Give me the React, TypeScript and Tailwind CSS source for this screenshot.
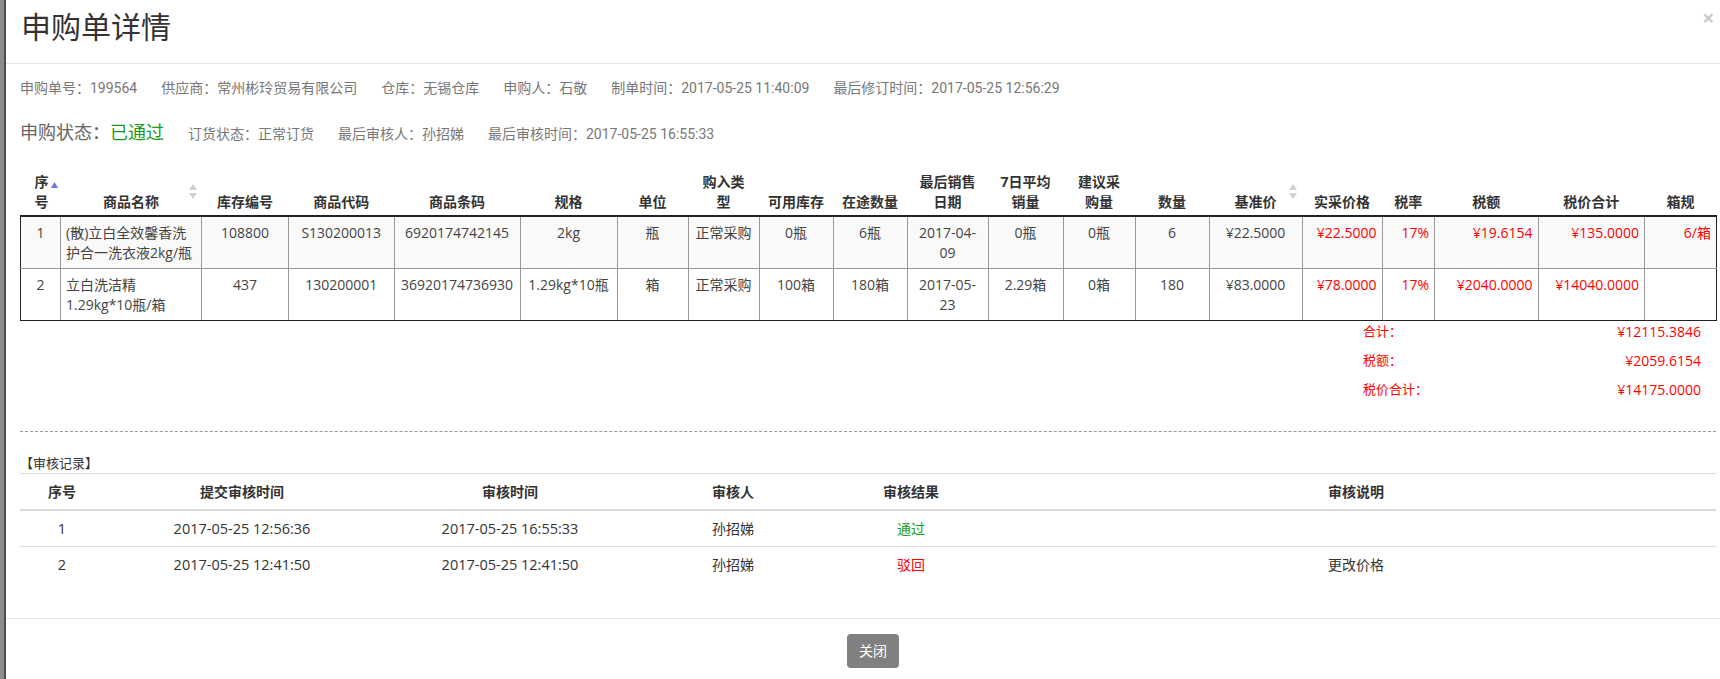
import React from 'react';

const OPEN = "font-[family-name:'Open_Sans','Noto_Sans_CJK_SC',sans-serif]";

const colW = [
  'w-[40px]', 'w-[141px]', 'w-[87px]', 'w-[105.5px]', 'w-[126px]', 'w-[97px]', 'w-[71px]', 'w-[71px]',
  'w-[74px]', 'w-[74px]', 'w-[81px]', 'w-[75px]', 'w-[72px]', 'w-[74px]', 'w-[93px]', 'w-[80px]',
  'w-[52.5px]', 'w-[103.5px]', 'w-[106.5px]', 'w-[72px]',
];

// c = center, l = left, r = right (red money columns)
const align = ['c', 'l', 'c', 'c', 'c', 'c', 'c', 'c', 'c', 'c', 'c', 'c', 'c', 'c', 'c', 'r', 'r', 'r', 'r', 'r'];

const heads: React.ReactNode[] = [
  null,
  '商品名称', '库存编号', '商品代码', '商品条码', '规格', '单位',
  <>购入类<br />型</>, '可用库存', '在途数量', <>最后销售<br />日期</>, <>7日平均<br />销量</>,
  <>建议采<br />购量</>, '数量', '基准价', '实采价格', '税率', '税额', '税价合计', '箱规',
];

const rows: React.ReactNode[][] = [
  [
    '1', <>(散)立白全效馨香洗<br />护合一洗衣液2kg/瓶</>, '108800', 'S130200013', '6920174742145', '2kg', '瓶',
    '正常采购', '0瓶', '6瓶', <>2017-04-<br />09</>, '0瓶', '0瓶', '6', '¥22.5000', '¥22.5000', '17%',
    '¥19.6154', '¥135.0000', '6/箱',
  ],
  [
    '2', <>立白洗洁精<br />1.29kg*10瓶/箱</>, '437', '130200001', '36920174736930', '1.29kg*10瓶', '箱',
    '正常采购', '100箱', '180箱', <>2017-05-<br />23</>, '2.29箱', '0箱', '180', '¥83.0000', '¥78.0000', '17%',
    '¥2040.0000', '¥14040.0000', '',
  ],
];

const audits = [
  { no: '1', submit: '2017-05-25 12:56:36', at: '2017-05-25 16:55:33', who: '孙招娣', ok: true, note: '' },
  { no: '2', submit: '2017-05-25 12:41:50', at: '2017-05-25 12:41:50', who: '孙招娣', ok: false, note: '更改价格' },
];

function SortBoth() {
  return (
    <svg width="8" height="15" viewBox="0 0 8 15" className="absolute right-[5px] top-[17px]">
      <path d="M4 0 L8 6 L0 6 Z" fill="#d0d0d0" />
      <path d="M4 15 L8 9 L0 9 Z" fill="#d0d0d0" />
    </svg>
  );
}

function SortAsc() {
  return (
    <svg width="7" height="6" viewBox="0 0 7 6" className="inline-block ml-[2px] align-[-1px]">
      <path d="M3.5 0 L7 6 L0 6 Z" fill="#7275e3" />
    </svg>
  );
}

export default function App() {
  return (
    <div className="flex w-[1720px] h-[679px] overflow-hidden bg-white font-[family-name:Roboto,'Noto_Sans_CJK_SC',sans-serif]">
      <div className="w-[4px] shrink-0 bg-[#8c8c8c]" />
      <div className="w-[2px] shrink-0 bg-[#4d4d4d]" />

      <div className="flex-1 flex flex-col bg-white min-w-0">
        {/* modal header */}
        <div className="flex items-start justify-between h-[64px] shrink-0 border-b border-[#e5e5e5]">
          <h4 className="pl-[15px] pt-[10px] text-[30px] leading-[36px] text-[#333]">申购单详情</h4>
          <button className="mt-[8px] mr-[6px] text-[21px] leading-[21px] font-bold text-black opacity-20">×</button>
        </div>

        {/* modal body */}
        <div className="pl-[14px] pr-[4px] pt-[14px] pb-[36px]">
          <div className="flex gap-[24px] text-[14px] leading-[20px] text-[#777] whitespace-nowrap">
            <span>申购单号：199564</span>
            <span>供应商：常州彬玲贸易有限公司</span>
            <span>仓库：无锡仓库</span>
            <span>申购人：石敬</span>
            <span>制单时间：2017-05-25 11:40:09</span>
            <span>最后修订时间：2017-05-25 12:56:29</span>
          </div>

          <div className="mt-[23px] flex items-baseline gap-[24px] leading-[24px] text-[14px] text-[#777] whitespace-nowrap">
            <span className="text-[18px] text-[#666]">
              申购状态：<span className="text-[#1a9c1a]">已通过</span>
            </span>
            <span>订货状态：正常订货</span>
            <span>最后审核人：孙招娣</span>
            <span>最后审核时间：2017-05-25 16:55:33</span>
          </div>

          {/* goods table */}
          <table className={`mt-[21px] w-[1696px] table-fixed border-collapse text-[14px] leading-[20px] ${OPEN}`}>
            <colgroup>
              {colW.map((w, i) => (
                <col key={i} className={w} />
              ))}
            </colgroup>
            <thead>
              <tr>
                {heads.map((h, i) => (
                  <th
                    key={i}
                    className={`relative align-bottom pt-[5px] pb-[3px] text-center font-bold text-[#333] border-b-2 border-[#222] ${
                      i === 0 ? 'px-0' : 'px-[5px]'
                    }`}
                  >
                    {i === 0 ? (
                      <div className="text-left pl-[14px] whitespace-nowrap">
                        序<SortAsc />
                        <br />号
                      </div>
                    ) : (
                      h
                    )}
                    {(i === 1 || i === 14) && <SortBoth />}
                  </th>
                ))}
              </tr>
            </thead>
            <tbody>
              {rows.map((r, ri) => (
                <tr key={ri} className={ri === 0 ? 'bg-[#f9f9f9]' : 'bg-white'}>
                  {r.map((c, ci) => (
                    <td
                      key={ci}
                      className={`align-top pt-[6px] pb-[5px] px-[5px] border border-[#999] whitespace-nowrap ${
                        align[ci] === 'l' ? 'text-left text-[#444]' : align[ci] === 'r' ? 'text-right text-[#f00]' : 'text-center text-[#444]'
                      } ${ci === 0 ? 'border-l-[#222]' : ''} ${ci === r.length - 1 ? 'border-r-[#222]' : ''} ${
                        ri === rows.length - 1 ? 'border-b-[#222]' : ''
                      }`}
                    >
                      {c}
                    </td>
                  ))}
                </tr>
              ))}
            </tbody>
          </table>

          {/* totals */}
          <div className="ml-auto mr-[15px] w-[338px] pt-[1px] text-[#f00]">
            {[
              ['合计：', '¥12115.3846'],
              ['税额：', '¥2059.6154'],
              ['税价合计：', '¥14175.0000'],
            ].map(([k, v]) => (
              <div key={k} className="flex justify-between h-[29px] leading-[20px]">
                <span className="text-[13px]">{k}</span>
                <span className={`text-[14px] ${OPEN}`}>{v}</span>
              </div>
            ))}
          </div>

          <div className="mt-[22px] border-t border-dashed border-[#999]" />

          <div className="pt-[23px] text-[13px] leading-[18px] text-[#333]">【审核记录】</div>

          {/* audit table */}
          <table className="w-[1696px] table-fixed border-collapse leading-[20px]">
            <colgroup>
              <col className="w-[84px]" />
              <col className="w-[276px]" />
              <col className="w-[260px]" />
              <col className="w-[186px]" />
              <col className="w-[170px]" />
              <col className="w-[720px]" />
            </colgroup>
            <thead>
              <tr>
                {['序号', '提交审核时间', '审核时间', '审核人', '审核结果', '审核说明'].map((h) => (
                  <th
                    key={h}
                    className="pt-[8px] pb-[7px] text-center text-[14px] font-bold text-[#333] border-t border-b-2 border-[#ddd]"
                  >
                    {h}
                  </th>
                ))}
              </tr>
            </thead>
            <tbody className={`text-[14.5px] text-[#333] ${OPEN}`}>
              {audits.map((a) => (
                <tr key={a.no}>
                  <td className="pt-[8px] pb-[7px] text-center border-t border-[#ddd]">{a.no}</td>
                  <td className="pt-[8px] pb-[7px] text-center border-t border-[#ddd]">{a.submit}</td>
                  <td className="pt-[8px] pb-[7px] text-center border-t border-[#ddd]">{a.at}</td>
                  <td className="pt-[8px] pb-[7px] text-center text-[14px] border-t border-[#ddd]">{a.who}</td>
                  <td className={`pt-[8px] pb-[7px] text-center text-[14px] border-t border-[#ddd] ${a.ok ? 'text-[#1a9c1a]' : 'text-[#f00]'}`}>
                    {a.ok ? '通过' : '驳回'}
                  </td>
                  <td className="pt-[8px] pb-[7px] text-center text-[14px] border-t border-[#ddd]">{a.note}</td>
                </tr>
              ))}
            </tbody>
          </table>
        </div>

        {/* modal footer */}
        <div className="border-t border-[#e5e5e5] pt-[15px] pl-[20px] flex justify-center">
          <button className="h-[34px] px-[12px] rounded-[4px] bg-[#808080] text-white text-[14px] leading-[20px]">
            关闭
          </button>
        </div>
      </div>
    </div>
  );
}
